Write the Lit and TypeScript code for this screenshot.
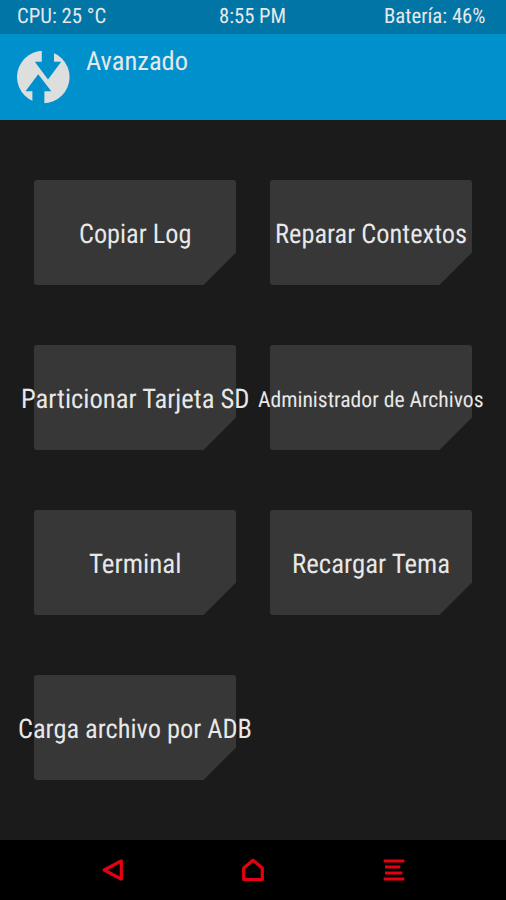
import { LitElement, html, css, svg } from "lit";
import { customElement, property } from "lit/decorators.js";

// A single line of condensed text, fitted to a fixed advance width.
@customElement("fit-text")
class FitText extends LitElement {
  @property() text = "";
  @property({ type: Number }) width = 100;
  @property({ type: Number }) size = 26;
  @property({ type: Number }) baseline = 23.2;

  static styles = css`
    :host { display: block; flex: none; }
    svg { display: block; overflow: visible; }
    text {
      font-family: "Roboto Condensed", Roboto, "Liberation Sans", sans-serif;
      text-rendering: geometricPrecision;
      fill: #e8e8e8;
    }
  `;

  render() {
    const h = 30;
    return html`<svg width=${this.width} height=${h}>
      ${svg`<text x="0" y=${this.baseline} font-size=${this.size} textLength=${this.width} lengthAdjust="spacingAndGlyphs">${this.text}</text>`}
    </svg>`;
  }
}

interface Action { label: string; width: number; size?: number; baseline?: number; }

const ACTIONS: Action[] = [
  { label: "Copiar Log", width: 112.4 },
  { label: "Reparar Contextos", width: 192 },
  { label: "Particionar Tarjeta SD", width: 228.5 },
  { label: "Administrador de Archivos", width: 225.5, size: 22, baseline: 21.7 },
  { label: "Terminal", width: 92.5 },
  { label: "Recargar Tema", width: 158 },
  { label: "Carga archivo por ADB", width: 234 },
];

@customElement("app-root")
class AppRoot extends LitElement {
  static styles = css`
    :host {
      display: flex;
      flex-direction: column;
      height: 900px;
      width: 506px;
      overflow: hidden;
      background: #1b1b1b;
    }
    .status {
      height: 34px;
      box-sizing: border-box;
      padding: 0 21px 0 16.5px;
      display: grid;
      grid-template-columns: 1fr auto 1fr;
      background: #0075a6;
    }
    .status :nth-child(2) { margin-left: 4px; }
    .status :last-child { justify-self: end; }
    .header {
      height: 86px;
      box-sizing: border-box;
      display: flex;
      padding: 16px 17px 0;
      gap: 16.2px;
      background: #0090cc;
    }
    .logo { display: block; width: 53px; height: 54px; }
    .title { margin-top: -3px; }
    main {
      flex: 1;
      display: grid;
      grid-template-columns: 202px 202px;
      grid-auto-rows: 105px;
      gap: 60px 34px;
      padding: 60px 34px 0;
    }
    .card {
      position: relative;
      display: flex;
      justify-content: center;
      padding: 40px 0 0;
      border: 0;
      background: none;
      min-width: 0;
    }
    .card::before {
      content: "";
      position: absolute;
      inset: 0;
      border-radius: 3px;
      background: #373737;
      clip-path: polygon(0 0, 100% 0, 100% 72.5px, 169.5px 100%, 0 100%);
    }
    .card fit-text { position: relative; }
    nav {
      height: 60px;
      display: flex;
      justify-content: center;
      align-items: center;
      gap: 116.5px;
      background: #000;
    }
    nav svg { display: block; width: 24px; height: 24px; fill: none; stroke: #e60012; stroke-width: 3.2; stroke-linejoin: round; }
  `;

  render() {
    return html`
      <div class="status">
        <fit-text text="CPU: 25 °C" width="89.3" size="21"></fit-text>
        <fit-text text="8:55 PM" width="67" size="21"></fit-text>
        <fit-text text="Batería: 46%" width="101.5" size="21"></fit-text>
      </div>
      <div class="header">
        <svg class="logo" viewBox="0 0 53 54">
          <defs><clipPath id="disc"><circle cx="26.3" cy="27" r="27" /></clipPath></defs>
          <circle cx="26.3" cy="27" r="26.3" fill="#dcdfde" />
          <g clip-path="url(#disc)" fill="#0090cc">
            <path d="M24.8 0H37V11.7H44.2L31 29.6L17.8 11.7H24.8Z" />
            <path d="M15.4 54V41.3H8.5L21.2 24.3L34.3 41.3H27.4V54Z" />
          </g>
        </svg>
        <fit-text class="title" text="Avanzado" width="102" size="26.5"></fit-text>
      </div>
      <main>
        ${ACTIONS.map((a) => html`<button class="card">
          <fit-text .text=${a.label} .width=${a.width} .size=${a.size ?? 27} .baseline=${a.baseline ?? 23.3}></fit-text>
        </button>`)}
      </main>
      <nav>
        <svg viewBox="0 0 24 24"><path d="M20.3 2.9V21.1L3.2 12Z" /></svg>
        <svg viewBox="0 0 24 24"><path d="M2.7 21.5V9.9L12 2.3L21.3 9.9V21.5Z" /></svg>
        <svg viewBox="0 0 24 24"><path d="M1.7 3H22.3M3 9H18.3M3 15H20.3M1.7 21H22.3" stroke-width="3" /></svg>
      </nav>
    `;
  }
}
